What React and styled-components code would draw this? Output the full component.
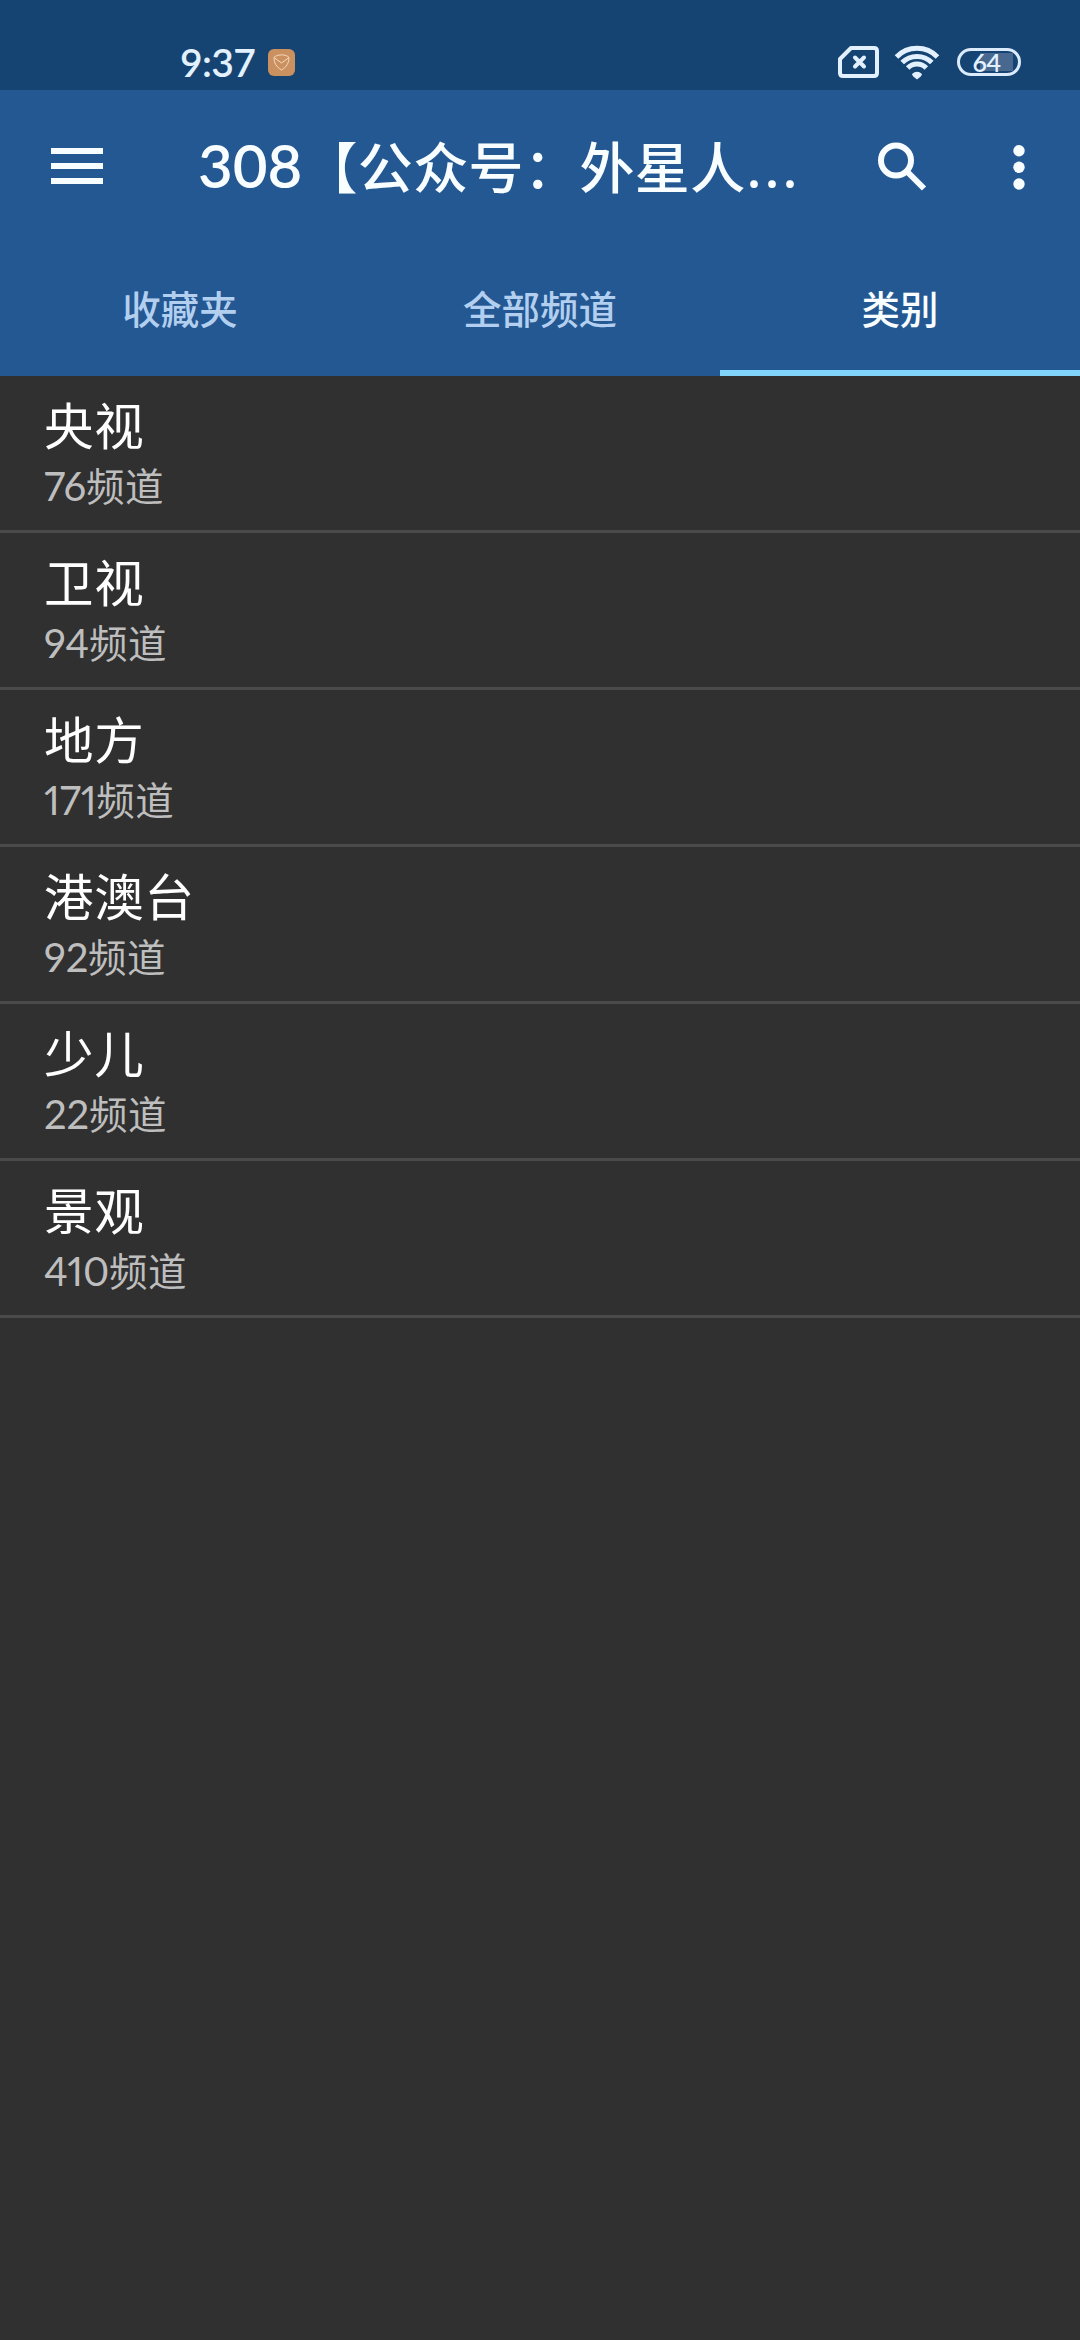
import React from "react";
import styled, { createGlobalStyle } from "styled-components";

const GlobalStyle = createGlobalStyle`
  body {
    margin: 0;
    background: #303030;
    font-family: Lato, "Noto Sans CJK SC", sans-serif;
  }
`;

const Screen = styled.div`
  display: flex;
  flex-direction: column;
  width: 1080px;
  height: 2340px;
  background: #303030;
  overflow: hidden;
`;

const StatusBar = styled.div`
  box-sizing: border-box;
  display: flex;
  align-items: center;
  height: 90px;
  padding: 35px 59px 1px 180px;
  background: #164472;
`;

const Clock = styled.span`
  width: 88px;
  font-size: 39px;
  font-weight: 600;
  line-height: 54px;
  letter-spacing: -0.6px;
  color: #e3f1ff;
`;

const StatusIcons = styled.div`
  display: flex;
  align-items: center;
  gap: 14px;
  margin-left: auto;
`;

const Battery = styled.div`
  box-sizing: border-box;
  display: flex;
  align-items: center;
  justify-content: center;
  width: 64px;
  height: 28px;
  margin-left: 2px;
  padding-right: 5px;
  border: 3px solid #dcebfb;
  border-radius: 14px;
  background: radial-gradient(#48688f, #48688f) 20px 2px / 33px 18px no-repeat;
  font-size: 25px;
  font-weight: 600;
  line-height: 22px;
  letter-spacing: -0.5px;
  color: #e3f1ff;
`;

const Toolbar = styled.header`
  box-sizing: border-box;
  display: flex;
  align-items: center;
  height: 154px;
  padding: 0 44px 3px 51px;
  background: #245892;
`;

const MenuButton = styled.div`
  display: flex;
  flex-direction: column;
  gap: 9px;
  width: 52px;
  margin-right: 95px;
`;

const MenuLine = styled.span`
  height: 6px;
  background: #f8fdff;
`;

const Title = styled.h1`
  flex: 1;
  margin: 0;
  font-size: 55px;
  font-weight: 500;
  line-height: 80px;
  letter-spacing: 0.4px;
  white-space: nowrap;
  color: #f8fdff;
`;

const TitleNumber = styled.span`
  font-size: 60px;
  font-weight: 600;
  letter-spacing: 0;
`;

const Ellipsis = styled.span`
  font-weight: 600;
  letter-spacing: 5px;
  padding-left: 2px;
`;

const Tabs = styled.nav`
  display: grid;
  grid-template-columns: repeat(3, 1fr);
  height: 132px;
  background: #245892;
`;

const Tab = styled.div`
  box-sizing: border-box;
  height: 132px;
  padding-top: 4px;
  border-bottom: 6px solid ${({ $active }) => ($active ? "#81d4fa" : "#245892")};
  font-size: 38.5px;
  font-weight: 500;
  line-height: 122px;
  text-align: center;
  color: ${({ $active }) => ($active ? "#f8fdff" : "#b3cfef")};
`;

const Row = styled.div`
  box-sizing: border-box;
  height: 157px;
  padding: 17px 44px 0;
  border-bottom: 3px solid #4a4a4a;
`;

const Name = styled.div`
  font-size: 49.5px;
  line-height: 66px;
  letter-spacing: 0.7px;
  color: #ffffff;
`;

const Channels = styled.div`
  font-size: 38.5px;
  line-height: 54px;
  letter-spacing: 0.5px;
  color: #bebebe;
`;

const Count = styled.span`
  font-size: 40px;
  letter-spacing: -0.2px;
  font-variant-numeric: proportional-nums;
`;

const AppBadge = () => (
  <svg width="27" height="27" viewBox="0 0 27 27" fill="none">
    <rect width="27" height="27" rx="6" fill="#cb905f" />
    <path
      d="M6 8.500 C9 5 18 5 21 8.500 C21 14 18.500 18 13.500 21 C8.500 18 6 14 6 8.500 L13.500 14 L21 8.500"
      stroke="#f6dcc0"
      strokeWidth="1"
    />
  </svg>
);

const SimIcon = () => (
  <svg width="41" height="32" viewBox="0 0 41 32" fill="none" stroke="#e3f1ff">
    <path
      d="M13 2 H36 Q39 2 39 5 V27 Q39 30 36 30 H5 Q2 30 2 27 V13 Z"
      strokeWidth="4"
      strokeLinejoin="round"
    />
    <path
      d="M17 11.500 L26 20.500 M26 11.500 L17 20.500"
      strokeWidth="4"
      strokeLinecap="round"
    />
  </svg>
);

const WifiIcon = () => (
  <svg width="48" height="36" viewBox="0 0 48 36" fill="none" stroke="#e3f1ff">
    <g strokeWidth="5">
      <path d="M3.500 13 A28.500 28.500 0 0 1 44.500 13" />
      <path d="M9.200 18.600 A20.800 20.800 0 0 1 38.800 18.600" />
      <path d="M14.700 24 A13 13 0 0 1 33.300 24" />
    </g>
    <path
      d="M19 30 Q24 25.500 29 30 Q29 32 24 35.500 Q19 32 19 30 Z"
      fill="#e3f1ff"
      stroke="none"
    />
  </svg>
);

const SearchIcon = () => (
  <svg width="50" height="50" viewBox="0 0 50 50" fill="none" stroke="#f8fdff">
    <circle cx="19" cy="19.500" r="15" strokeWidth="6" />
    <path d="M30.500 31 L47 47.500" strokeWidth="6" />
  </svg>
);

const MoreIcon = () => (
  <svg width="12" height="48" viewBox="0 0 12 48" fill="#f8fdff">
    <circle cx="6" cy="8.700" r="5.700" />
    <circle cx="6" cy="25.300" r="5.700" />
    <circle cx="6" cy="42" r="5.700" />
  </svg>
);

const Actions = styled.div`
  display: flex;
  align-items: center;
  gap: 86px;
  padding-right: 11px;
`;

const tabs = ["收藏夹", "全部频道", "类别"];

const categories = [
  { name: "央视", count: 76 },
  { name: "卫视", count: 94 },
  { name: "地方", count: 171 },
  { name: "港澳台", count: 92 },
  { name: "少儿", count: 22 },
  { name: "景观", count: 410 },
];

const App = () => {
  return (
    <Screen>
      <GlobalStyle />
      <StatusBar>
        <Clock>9:37</Clock>
        <AppBadge />
        <StatusIcons>
          <SimIcon />
          <WifiIcon />
          <Battery>64</Battery>
        </StatusIcons>
      </StatusBar>
      <Toolbar>
        <MenuButton>
          <MenuLine />
          <MenuLine />
          <MenuLine />
        </MenuButton>
        <Title>
          <TitleNumber>308</TitleNumber>【公众号：外星人<Ellipsis>...</Ellipsis>
        </Title>
        <Actions>
          <SearchIcon />
          <MoreIcon />
        </Actions>
      </Toolbar>
      <Tabs>
        {tabs.map((tab, idx) => (
          <Tab key={tab} $active={idx === 2}>
            {tab}
          </Tab>
        ))}
      </Tabs>
      {categories.map(({ name, count }) => (
        <Row key={name}>
          <Name>{name}</Name>
          <Channels>
            <Count>{count}</Count>频道
          </Channels>
        </Row>
      ))}
    </Screen>
  );
};

export default App;
